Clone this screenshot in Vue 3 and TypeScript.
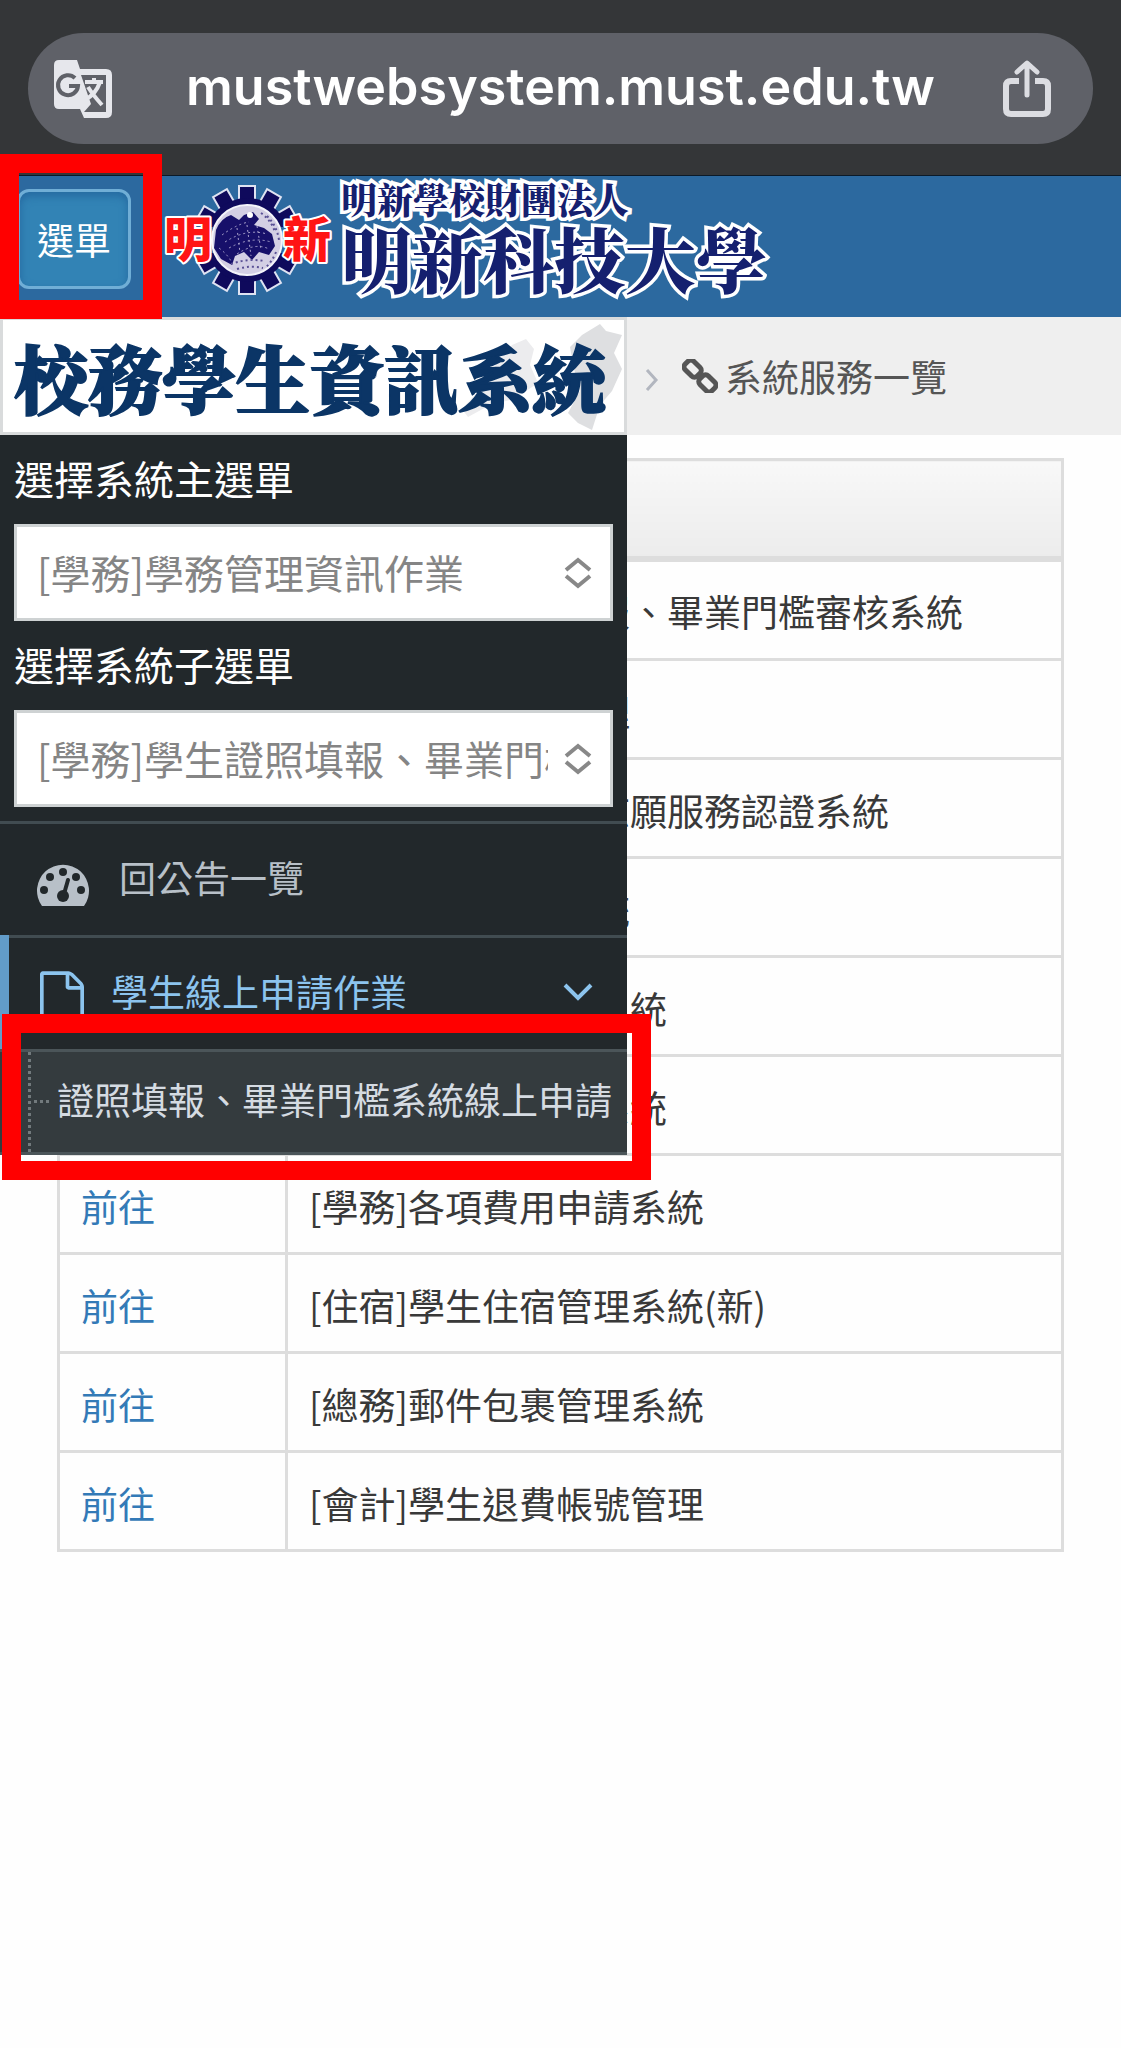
<script setup lang="ts">
import { ref } from 'vue'

interface ServiceRow {
  name: string
  covered?: boolean
}

const host = 'mustwebsystem.must.edu.tw'
const mainMenu = ref('[學務]學務管理資訊作業')
const subMenu = ref('[學務]學生證照填報、畢業門檻審核系統')

// Rows that lie behind the open menu keep their link out of reach.
const services: ServiceRow[] = [
  { name: '[學務]學生證照填報、畢業門檻審核系統', covered: true },
  { name: '[學務]學生請假管理', covered: true },
  { name: '[學務]學生志工暨志願服務認證系統', covered: true },
  { name: '[學務]社團活動系統', covered: true },
  { name: '[學務]校外獎學金系統', covered: true },
  { name: '[學務]學生證管理系統', covered: true },
  { name: '[學務]各項費用申請系統' },
  { name: '[住宿]學生住宿管理系統(新)' },
  { name: '[總務]郵件包裹管理系統' },
  { name: '[會計]學生退費帳號管理' },
]

const teeth = [0, 30, 60, 120, 150, 180, 210, 240, 300, 330]
const gaugeDots = [
  [7, 26],
  [13, 13],
  [26, 8],
  [39, 13],
  [44, 26],
]
</script>

<template>
  <div class="page">
    <div class="browser-bar">
      <div class="address">
        <button class="tool" type="button" aria-label="翻譯">
          <svg width="58" height="58" viewBox="0 0 58 58">
            <path
              fill="#e6e7ec"
              fill-rule="evenodd"
              d="M5 0H23L26 9H52Q58 9 58 15V52Q58 58 52 58H30L26 49H5Q0 49 0 44V5Q0 0 5 0ZM27 15L37 44L30 52H52V15Z"
            />
            <path d="M21 18A10 10 0 1 0 24 26H15" fill="none" stroke="#5f6168" stroke-width="4" />
            <path
              d="M31 22H49M40 18V22M46 22Q42 34 31 40M34 27Q39 35 48 45"
              fill="none"
              stroke="#e6e7ec"
              stroke-width="4"
            />
          </svg>
        </button>
        <span class="host">{{ host }}</span>
        <button class="tool share" type="button" aria-label="分享">
          <svg width="50" height="58" viewBox="0 0 50 58" fill="none" stroke="#dcdde2" stroke-width="6">
            <path d="M17 21H9Q4 21 4 26V49Q4 54 9 54H41Q46 54 46 49V26Q46 21 41 21H33" />
            <path d="M25 35V4M15 12L25 3L35 12" stroke-linecap="round" stroke-linejoin="round" stroke-width="5" />
          </svg>
        </button>
      </div>
    </div>

    <header class="site-header">
      <button class="menu-button" type="button">選單</button>
      <svg class="emblem" width="172" height="112" viewBox="-86 -56 172 112">
        <g fill="#0f0a5c" stroke="#dfe3f2" stroke-width="2">
          <rect v-for="a in teeth" :key="a" x="-8" y="-54" width="16" height="20" :transform="`rotate(${a})`" />
        </g>
        <circle r="42" fill="#0f0a5c" />
        <path d="M-50-13H50V13H-50Z" fill="#2c699f" />
        <circle r="35" fill="#d3cfe4" stroke="#f4f4fa" stroke-width="2" />
        <path
          fill="#17106a"
          d="M-31-10Q-26-22-16-25L-8-20L-3-25L6-28L12-21L7-15L17-12L25-6L28 6L22 15L12 12L5 20L-3 12L-12 16L-15 25L-26 19L-33 8Z"
        />
        <path
          fill="none"
          stroke="#a9a2cc"
          stroke-width="1"
          stroke-dasharray="2 3"
          d="M-25-5Q-10-16 2-18M-22 2Q0-12 20-6M-18 8Q4-4 24 2M-10 14Q8 2 22 9M-28 8Q-20 14-16 21M0-15L4 16M10-14L14 10M-10-12L-7 13"
        />
        <path
          fill="none"
          stroke="#5a5195"
          stroke-width="2"
          stroke-dasharray="2 3"
          d="M-10 29Q4 25 16 28M-16 24Q0 18 18 21M20-24Q30-14 32 0M14-27Q24-20 28-8M29 12Q25 22 18 28"
        />
        <circle cx="3" cy="-25" r="3" fill="#fff" />
        <g class="emblem-text">
          <text x="-83" y="17">明</text>
          <text x="36" y="17">新</text>
        </g>
      </svg>
      <div class="school">
        <span class="school-owner">明新學校財團法人</span>
        <span class="school-name">明新科技大學</span>
      </div>
    </header>

    <div class="body">
      <nav class="crumbs" aria-label="路徑">
        <svg class="divider" width="14" height="24" viewBox="0 0 14 24" fill="none" stroke="#b2b6bf" stroke-width="3">
          <path d="M2 2L11 12L2 22" />
        </svg>
        <svg class="chain" width="36" height="34" viewBox="0 0 36 34" fill="none" stroke="#555" stroke-width="5">
          <rect x="-9" y="-6" width="17" height="12" rx="4" transform="translate(11 10) rotate(45)" />
          <rect x="-8" y="-6" width="17" height="12" rx="4" transform="translate(25 24) rotate(45)" />
        </svg>
        <span>系統服務一覽</span>
      </nav>

      <main class="content">
        <table class="services">
          <thead>
            <tr>
              <th class="go" aria-label="連結"></th>
              <th aria-label="系統名稱"></th>
            </tr>
          </thead>
          <tbody>
            <tr v-for="row in services" :key="row.name">
              <td><a v-if="!row.covered" href="#">前往</a></td>
              <td>{{ row.name }}</td>
            </tr>
          </tbody>
        </table>
      </main>

      <aside class="sidebar">
        <div class="system-title">
          <svg class="brush" width="170" height="110" viewBox="0 0 170 110" aria-hidden="true">
            <path fill="#ececee" d="M58 24L72 18L80 28L76 44L84 62L60 78L36 84L14 96L8 88L30 64L44 40Z" />
            <path fill="#dedfe1" d="M116 26L128 14L146 3L152 10L168 14L160 32L168 48L158 70L146 84L138 109L124 102L114 92L126 70L120 48Z" />
          </svg>
          <span>校務學生資訊系統</span>
        </div>
        <div class="pickers">
          <label for="main-menu">選擇系統主選單</label>
          <div class="picker">
            <select id="main-menu" v-model="mainMenu">
              <option>[學務]學務管理資訊作業</option>
            </select>
            <svg width="28" height="32" viewBox="0 0 28 32" fill="none" stroke="#888" stroke-width="4">
              <path d="M2 13L14 3L26 13M2 19L14 29L26 19" />
            </svg>
          </div>
          <label for="sub-menu">選擇系統子選單</label>
          <div class="picker">
            <select id="sub-menu" v-model="subMenu">
              <option>[學務]學生證照填報、畢業門檻審核系統</option>
            </select>
            <svg width="28" height="32" viewBox="0 0 28 32" fill="none" stroke="#888" stroke-width="4">
              <path d="M2 13L14 3L26 13M2 19L14 29L26 19" />
            </svg>
          </div>
        </div>
        <ul class="menu">
          <li>
            <a class="item" href="#">
              <svg class="gauge" width="52" height="42" viewBox="0 0 52 42">
                <path d="M5 42A26 26 0 1 1 47 42Z" fill="#b8c0c8" />
                <g fill="#22282b">
                  <circle v-for="d in gaugeDots" :key="d[0]" :cx="d[0]" :cy="d[1]" r="4" />
                  <circle cx="26" cy="32" r="6" />
                </g>
                <path d="M27 30L31 16" stroke="#22282b" stroke-width="4" stroke-linecap="round" />
              </svg>
              <span>回公告一覽</span>
            </a>
          </li>
          <li class="open">
            <a class="item active" href="#">
              <svg class="file" width="44" height="52" viewBox="0 0 1536 1792">
                <path
                  fill="#8cc4ee"
                  d="M1468 380q28 28 48 76t20 88v1152q0 40-28 68t-68 28H96q-40 0-68-28t-28-68V96q0-40 28-68T96 0h896q40 0 88 20t76 48zm-444-244v376h376q-10-29-22-41l-313-313q-12-12-41-22zm384 1528V640H992q-40 0-68-28t-28-68V128H128v1536h1280z"
                />
              </svg>
              <span>學生線上申請作業</span>
              <svg class="caret" width="30" height="20" viewBox="0 0 30 20" fill="none" stroke="#8cc4ee" stroke-width="4">
                <path d="M2 3L15 16L28 3" />
              </svg>
            </a>
            <ul class="submenu">
              <li><a href="#">證照填報、畢業門檻系統線上申請</a></li>
            </ul>
          </li>
        </ul>
      </aside>
    </div>

    <div class="mark mark-button"></div>
    <div class="mark mark-item"></div>
  </div>
</template>

<style>
body {
  margin: 0;
  background: #fff;
}
</style>

<style scoped>
.page {
  position: relative;
  min-height: 100vh;
  overflow: hidden;
  background: #fefefe;
  color: #393939;
  font-family: 'Noto Sans CJK TC', 'Noto Sans', sans-serif;
  font-size: 37px;
  line-height: 53px;
}

button,
select {
  font: inherit;
}

a {
  text-decoration: none;
}

.browser-bar {
  padding: 33px 28px 31px;
  border-bottom: 1px solid #0b1a28;
  background: #343638;
}

.address {
  display: flex;
  align-items: center;
  height: 111px;
  padding: 0 26px;
  border-radius: 56px;
  background: #5f6168;
}

.tool {
  flex: none;
  display: flex;
  width: 80px;
  padding: 0;
  border: 0;
  background: none;
}

.share {
  justify-content: center;
}

.host {
  flex: 1;
  padding-bottom: 4px;
  color: #fff;
  font-family: Inter, sans-serif;
  font-size: 52px;
  font-weight: 600;
  text-align: center;
}

.site-header {
  display: flex;
  align-items: flex-start;
  height: 141px;
  background: #2c699f;
}

.menu-button {
  flex: none;
  width: 114px;
  height: 100px;
  margin: 13px 0 0 17px;
  padding: 0;
  border: 3px solid #70aed6;
  border-radius: 12px;
  background: #3283b5;
  box-shadow: inset 0 4px 8px #2569a0;
  color: #fff;
}

.emblem {
  flex: none;
  margin: 8px 0 0 30px;
}

.emblem-text {
  fill: #ff1414;
  stroke: #fff;
  stroke-width: 4px;
  stroke-linejoin: round;
  paint-order: stroke;
  font-size: 48px;
  font-weight: 900;
}

.school {
  display: flex;
  flex-direction: column;
  margin-left: 8px;
  color: #15206f;
  font-family: 'Noto Serif CJK TC', 'Noto Sans CJK TC', serif;
  font-weight: 900;
  white-space: nowrap;
  -webkit-text-stroke: 7px #fff;
  paint-order: stroke fill;
}

.school-owner {
  margin-top: 3px;
  font-size: 36px;
  line-height: 40px;
}

.school-name {
  font-size: 71px;
  line-height: 74px;
}

.body {
  position: relative;
}

.crumbs {
  display: flex;
  align-items: center;
  height: 118px;
  padding-left: 645px;
  background: #efefef;
  color: #555;
}

.divider {
  margin-top: 8px;
}

.chain {
  margin: 0 7px 0 23px;
}

.content {
  padding: 23px 57px 0;
}

.services {
  width: 100%;
  border-collapse: collapse;
  table-layout: fixed;
}

.services th,
.services td {
  box-sizing: border-box;
  height: 99px;
  padding: 4px 22px 0 21px;
  border: 3px solid #ddd;
  text-align: left;
  font-weight: 400;
  white-space: nowrap;
}

.services .go {
  width: 228px;
}

.services th {
  border-bottom-width: 6px;
  background: linear-gradient(#f8f8f8, #ececec);
}

.services tbody tr:first-child td {
  height: 101px;
}

.services a {
  color: #337ab7;
}

.sidebar {
  position: absolute;
  top: 0;
  left: 0;
  width: 627px;
  background: #22282b;
}

.system-title {
  position: relative;
  box-sizing: border-box;
  display: flex;
  align-items: center;
  height: 118px;
  padding-left: 11px;
  border: 3px solid #d9dbdc;
  background: #fff;
  color: #0b3566;
  font-family: 'Noto Serif CJK TC', 'Noto Sans CJK TC', serif;
  font-size: 74px;
  font-weight: 900;
  white-space: nowrap;
  -webkit-text-stroke: 2px #0b3566;
}

.system-title span {
  position: relative;
}

.brush {
  position: absolute;
  top: 1px;
  right: 0;
}

.pickers {
  padding: 0 14px 14px;
  color: #fff;
  font-size: 40px;
}

.pickers label {
  display: block;
  padding-bottom: 2px;
  line-height: 87px;
}

.picker {
  position: relative;
}

.picker select {
  display: block;
  width: 100%;
  height: 97px;
  padding: 0 62px 0 20px;
  border: 3px solid #ced2d3;
  border-radius: 0;
  appearance: none;
  background: #fff;
  color: #858585;
}

.picker svg {
  position: absolute;
  top: 33px;
  right: 21px;
  pointer-events: none;
}

.menu,
.submenu {
  margin: 0;
  padding: 0;
  list-style: none;
}

.menu > li {
  border-top: 3px solid #414c51;
}

.item {
  display: flex;
  align-items: center;
  height: 111px;
  padding: 0 34px 0 37px;
  color: #b8c0c8;
}

.item span {
  padding-bottom: 5px;
}

.gauge {
  margin: 10px 30px 0 0;
}

.file {
  margin: 6px 27px 0 3px;
}

.caret {
  margin: 0 0 3px auto;
}

.active {
  color: #8cc4ee;
}

.open {
  position: relative;
}

.open::before {
  content: '';
  position: absolute;
  top: -3px;
  left: 0;
  width: 9px;
  height: 117px;
  background: #629cc9;
}

.submenu {
  position: relative;
  border-top: 3px solid #4b5559;
  border-bottom: 3px solid #4b5559;
  background: #343b3e;
}

.submenu::before {
  content: '';
  position: absolute;
  top: 0;
  bottom: 0;
  left: 28px;
  border-left: 3px dotted #727a7d;
}

.submenu::after {
  content: '';
  position: absolute;
  top: 48px;
  left: 34px;
  width: 15px;
  border-top: 3px dotted #727a7d;
}

.submenu a {
  display: block;
  padding: 0 0 5px 57px;
  color: #d5dbe2;
  line-height: 95px;
  white-space: nowrap;
}

.mark {
  position: absolute;
  box-sizing: border-box;
  border: 19px solid #f00;
  pointer-events: none;
}

.mark-button {
  top: 154px;
  left: 0;
  width: 162px;
  height: 165px;
}

.mark-item {
  top: 1014px;
  left: 2px;
  width: 649px;
  height: 166px;
}
</style>
